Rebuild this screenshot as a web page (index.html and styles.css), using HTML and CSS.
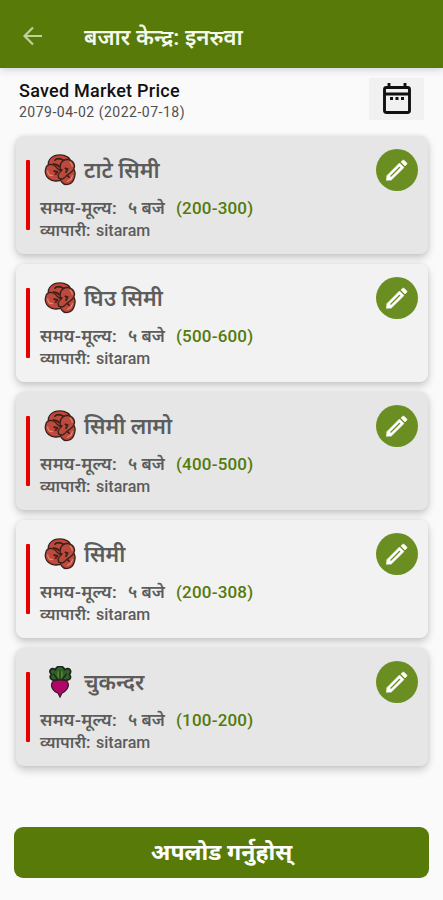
FILE: index.html
```html
<!DOCTYPE html>
<html lang="hi">
<head>
<meta charset="utf-8">
<title>बजार केन्द्र: इनरुवा</title>
<link rel="stylesheet" href="styles.css">
</head>
<body>
<svg class="defs" aria-hidden="true">
  <symbol id="beans" viewBox="0 0 34 34">
    <g fill="#bd4a3c" stroke="#3a211c" stroke-width="1.4">
      <path d="M5 13C3 6 9 1 17 1c6 0 11 3 11 7l-8 9H8Z"/>
      <path d="M2 15c1-5 8-5 11-1 2 3 4 4 7 4 4 1 5 6 0 9-6 3-13 2-17-3-2-3-2-6-1-9Z"/>
      <path d="M19 30c-3-3-1-6 2-8 4-2 5-6 8-7 4 0 5 6 3 11-2 6-9 9-13 4Z"/>
      <path d="M17 14c0-5 4-9 9-8 6 1 8 7 5 11-2 4-6 4-8 7-3 4-8 3-8-1 0-3 3-4 4-6-2 0-2-1-2-3Z"/>
    </g>
    <path d="M11 7c3-3 7-2 10 0M9 11c4-1 6 1 8 3M10 18l4 1-2 3M22 15l3 1-2 4M25 23l2 2" fill="none" stroke="#3a211c" stroke-width="1.900"/>
    <path d="M4 18c0 3 2 5 5 5M30 23c0 3-3 5-5 6M28 9c2 1 2 3 2 4" fill="none" stroke="#e98570" stroke-width="1.300" stroke-linecap="round"/>
  </symbol>
  <symbol id="beet" viewBox="0 0 34 34">
    <path d="M14 15C7 16 5 12 8 9 4 5 8 1 12 4c2-5 8-5 10 0 5-3 8 1 5 5 3 4 0 7-7 6Z" fill="#315f28" stroke="#192717" stroke-width="1.8"/>
    <path d="M17 3c-4 4-4 8 0 12 4-4 4-8 0-12Z" fill="#55852f"/>
    <path d="M17 4v12M10 8l5 7M24 8l-5 7" fill="none" stroke="#192717" stroke-width="1.3"/>
    <path d="M9 17c2-3 14-3 16 0 3 5-2 10-6 12l-2 4-2-4C10 27 6 22 9 17Z" fill="#b00767" stroke="#3b1730" stroke-width="1.3"/>
  </symbol>
  <symbol id="pencil" viewBox="0 0 24 24">
    <path d="M1.500 22.300 1.900 17.700 14.500 5l4.500 4.500L6.300 22ZM16 3.900l1.600-1.500q.8-.7 1.600 0l2.400 2.400q.7.8 0 1.600L20 8Z" fill="#fff" stroke="#fff" stroke-width=".6" stroke-linejoin="round"/>
    <path d="m5.500 18.500 9.500-9.500" stroke="#6b8e23" stroke-width="1.200"/>
  </symbol>
</svg>
<div class="screen">
  <header class="bar">
    <svg class="back" viewBox="0 0 20 20"><path d="M19 10H2M10 1.500 1.500 10l8.500 8.500" fill="none" stroke="#bfd19d" stroke-width="2.200"/></svg>
    <h1>बजार केन्द्र: इनरुवा</h1>
  </header>
  <section class="summary">
    <div><h2>Saved Market Price</h2><p>2079-04-02 (2022-07-18)</p></div>
    <div class="date"><svg viewBox="0 0 28 32"><path d="M3.500 4.500h21q2 0 2 2v21q0 2-2 2h-21q-2 0-2-2v-21q0-2 2-2ZM1.500 11h25M6 0v5M22 0v5" fill="none" stroke="#111" stroke-width="2.900"/><path d="M7 14h3v3H7zM12.500 14h3v3h-3zM18 14h3v3h-3z" fill="#111"/></svg></div>
  </section>
  <main class="list">
    <article class="card dark"><i class="rule"></i><div class="info"><div class="name"><svg class="crop"><use href="#beans"/></svg><h3>टाटे सिमी</h3></div><p class="time"><span class="label">समय-मूल्य:</span><span class="hour">५ बजे</span><b>(200-300)</b></p><p class="trader"><span>व्यापारी:</span><span>sitaram</span></p></div><span class="edit"><svg><use href="#pencil"/></svg></span></article>
    <article class="card"><i class="rule"></i><div class="info"><div class="name"><svg class="crop"><use href="#beans"/></svg><h3>घिउ सिमी</h3></div><p class="time"><span class="label">समय-मूल्य:</span><span class="hour">५ बजे</span><b>(500-600)</b></p><p class="trader"><span>व्यापारी:</span><span>sitaram</span></p></div><span class="edit"><svg><use href="#pencil"/></svg></span></article>
    <article class="card dark"><i class="rule"></i><div class="info"><div class="name"><svg class="crop"><use href="#beans"/></svg><h3>सिमी लामो</h3></div><p class="time"><span class="label">समय-मूल्य:</span><span class="hour">५ बजे</span><b>(400-500)</b></p><p class="trader"><span>व्यापारी:</span><span>sitaram</span></p></div><span class="edit"><svg><use href="#pencil"/></svg></span></article>
    <article class="card"><i class="rule"></i><div class="info"><div class="name"><svg class="crop"><use href="#beans"/></svg><h3>सिमी</h3></div><p class="time"><span class="label">समय-मूल्य:</span><span class="hour">५ बजे</span><b>(200-308)</b></p><p class="trader"><span>व्यापारी:</span><span>sitaram</span></p></div><span class="edit"><svg><use href="#pencil"/></svg></span></article>
    <article class="card dark"><i class="rule"></i><div class="info"><div class="name"><svg class="crop"><use href="#beet"/></svg><h3>चुकन्दर</h3></div><p class="time"><span class="label">समय-मूल्य:</span><span class="hour">५ बजे</span><b>(100-200)</b></p><p class="trader"><span>व्यापारी:</span><span>sitaram</span></p></div><span class="edit"><svg><use href="#pencil"/></svg></span></article>
  </main>
  <button class="upload">अपलोड गर्नुहोस्</button>
</div>
</body>
</html>
```
FILE: styles.css
```css
* { box-sizing: border-box; }
body, h1, h2, h3, p { margin: 0; }
body { background: #fafafa; font-family: Roboto, "Noto Sans", sans-serif; }
.defs { display: none; }
.screen { height: 900px; display: flex; flex-direction: column; overflow: hidden; }
.bar { height: 68px; flex: none; background: #587a09; display: flex; align-items: center; padding: 4px 0 0 23px; box-shadow: 0 1px 8px #c9c9d3; }
.back { width: 20px; height: 20px; margin-right: 41px; }
h1 { color: #f5faea; font-size: 22.3px; line-height: 32px; font-weight: 600; white-space: nowrap; padding-top: 2px; }
.summary { height: 68px; flex: none; display: flex; justify-content: space-between; padding: 10px 19px 0; }
h2 { font-size: 18px; line-height: 25px; font-weight: 500; color: #111; letter-spacing: .26px; }
.summary p { font-size: 14px; line-height: 19px; color: #505050; letter-spacing: .5px; }
.date { width: 55px; height: 42px; background: #f1f1f1; display: flex; justify-content: center; padding-top: 5px; }
.date svg { width: 28px; height: 32px; }
.list { display: flex; flex-direction: column; gap: 10px; padding: 0 15px 0 16px; }
.card { height: 118px; border-radius: 8px; background: #f2f2f2; display: flex; padding: 0 10px; box-shadow: 0 4px 8px #00000033, 0 0 4px #00000012; }
.card.dark { background: #e6e6e6; }
.rule { width: 4px; height: 70px; margin-top: 24px; border-radius: 1px; background: #e60000; flex: none; }
.info { flex: 1; padding: 16px 0 0 10px; white-space: nowrap; color: #5c5c5c; }
.name { display: flex; align-items: center; height: 36px; padding-left: 4px; }
.crop { width: 32px; height: 32px; margin-right: 8px; }
h3 { font-size: 21.7px; line-height: 32px; font-weight: 600; padding-top: 1px; }
.time { display: flex; font-size: 17px; line-height: 24px; height: 24px; margin-top: 8px; font-weight: 500; }
.label { width: 88px; font-size: 17.4px; font-weight: 600; letter-spacing: .2px; }
.hour { width: 48px; font-weight: 600; }
.time b { color: #527b0b; font-weight: 500; letter-spacing: .2px; }
.trader { display: flex; gap: 5px; font-size: 16px; line-height: 22px; height: 22px; font-weight: 500; }
.trader span:first-child { width: 51px; font-size: 16.3px; font-weight: 600; }
.edit { width: 42px; height: 42px; border-radius: 50%; background: #6b8e23; display: grid; place-items: center; margin-top: 13px; flex: none; }
.edit svg { width: 24px; height: 24px; }
.upload { margin: 61px 14px 0; height: 51px; flex: none; border: 0; border-radius: 9px; background: #587a09; color: #fff; font: 700 23px/32px Roboto, "Noto Sans", sans-serif; white-space: nowrap; }
```
